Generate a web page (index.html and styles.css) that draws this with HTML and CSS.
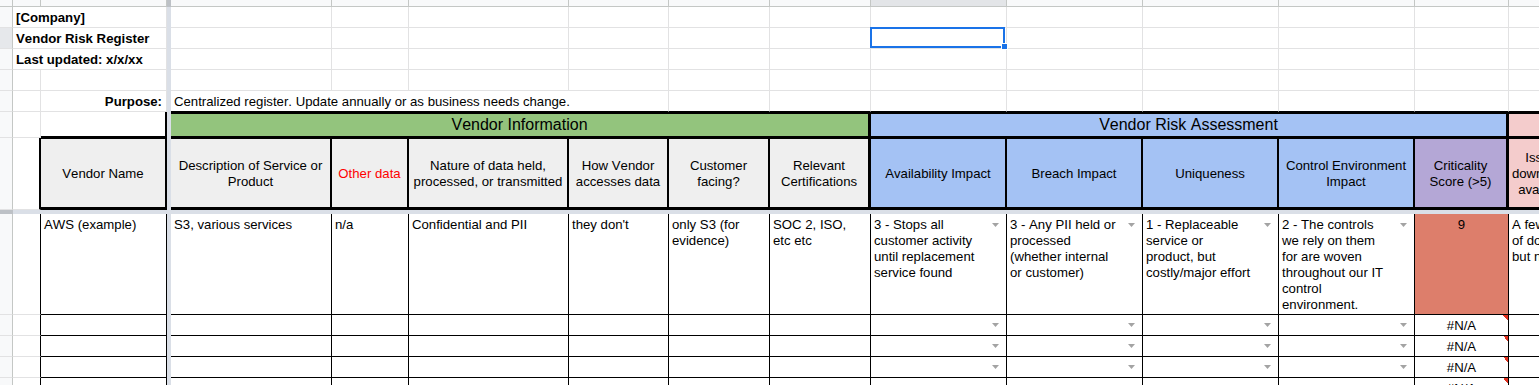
FILE: index.html
```html
<!DOCTYPE html>
<html lang="en">
<head>
<meta charset="utf-8">
<title>Vendor Risk Register</title>
<link rel="stylesheet" href="styles.css">
</head>
<body>
<div class="sheet">
  <div class="row r-hdr">
    <div class="ch"></div><div class="ch"></div><div class="ch"></div><div class="fzh"></div>
    <div class="ch"></div><div class="ch"></div><div class="ch"></div><div class="ch"></div><div class="ch"></div><div class="ch"></div>
    <div class="ch on"></div>
    <div class="ch"></div><div class="ch"></div><div class="ch"></div><div class="ch"></div><div class="ch"></div><div class="ch"></div>
  </div>
  <div class="row r-std">
    <div class="rh"></div><div class="title">[Company]</div><div class="fz"></div>
    <div></div><div></div><div></div><div></div><div></div><div></div><div></div><div></div><div></div><div></div><div></div><div></div><div></div>
  </div>
  <div class="row r-std">
    <div class="rh on"></div><div class="title">Vendor Risk Register</div><div class="fz"></div>
    <div></div><div></div><div></div><div></div><div></div><div></div>
    <div class="sel"><div class="selbox"><div class="handle"></div></div></div>
    <div></div><div></div><div></div><div></div><div></div><div></div>
  </div>
  <div class="row r-std">
    <div class="rh"></div><div class="title">Last updated: x/x/xx</div><div class="fz"></div>
    <div></div><div></div><div></div><div></div><div></div><div></div><div></div><div></div><div></div><div></div><div></div><div></div><div></div>
  </div>
  <div class="row r-std">
    <div class="rh"></div><div></div><div></div><div class="fz"></div>
    <div></div><div></div><div></div><div></div><div></div><div></div><div></div><div></div><div></div><div></div><div></div><div></div><div></div>
  </div>
  <div class="row r-std">
    <div class="rh"></div><div></div><div class="purpose">Purpose:</div><div class="fz"></div>
    <div class="note">Centralized register. Update annually or as business needs change.</div>
    <div class="tb"></div><div class="tb"></div><div class="tb"></div><div class="tb"></div><div class="tb"></div><div class="tb"></div><div class="tb"></div><div class="tb"></div><div class="tb"></div>
  </div>
  <div class="row r-band">
    <div class="rh"></div><div></div><div class="bx"></div><div class="fz"></div>
    <div class="band g">Vendor Information</div>
    <div class="band b">Vendor Risk Assessment</div>
    <div class="band p">Vendor Review</div>
  </div>
  <div class="row r-head">
    <div class="rh"></div><div class="al"></div>
    <div class="hd"><span>Vendor Name</span></div><div class="fz"></div>
    <div class="hd"><span>Description of Service or Product</span></div>
    <div class="hd"><span class="red">Other data</span></div>
    <div class="hd"><span>Nature of data held, processed, or transmitted</span></div>
    <div class="hd"><span>How Vendor accesses data</span></div>
    <div class="hd"><span>Customer facing?</span></div>
    <div class="hd end"><span>Relevant Certifications</span></div>
    <div class="hd b"><span>Availability Impact</span></div>
    <div class="hd b"><span>Breach Impact</span></div>
    <div class="hd b"><span>Uniqueness</span></div>
    <div class="hd b"><span>Control Environment Impact</span></div>
    <div class="hd v end"><span>Criticality Score (&gt;5)</span></div>
    <div class="hd p"><span class="nw">Issues with vendor's<br>downtime or data breach<br>availability in the past?</span></div>
    <div class="hd p"><span>Notes</span></div>
  </div>
  <div class="row r-frz">
    <div class="rhf"></div><div class="fzbar"></div>
  </div>
  <div class="row r-main">
    <div class="rh"></div><div class="a1"></div>
    <div class="d">AWS (example)</div><div class="fz"></div>
    <div class="d">S3, various services</div>
    <div class="d">n/a</div>
    <div class="d">Confidential and PII</div>
    <div class="d">they don't</div>
    <div class="d">only S3 (for evidence)</div>
    <div class="d">SOC 2, ISO, etc etc</div>
    <div class="dd"><span class="t">3 - Stops all customer activity until replacement service found</span><span class="ar"></span></div>
    <div class="dd"><span class="t">3 - Any PII held or processed (whether internal or customer)</span><span class="ar"></span></div>
    <div class="dd"><span class="t">1 - Replaceable service or product, but costly/major effort</span><span class="ar"></span></div>
    <div class="dd"><span class="t">2 - The controls we rely on them for are woven throughout our IT control environment.</span><span class="ar"></span></div>
    <div class="cs">9</div>
    <div class="d nw">A few instances<br>of downtime in 2022,<br>but no data loss.</div>
    <div class="d"></div>
  </div>
  <div class="row r-std">
    <div class="rh"></div><div class="a1"></div><div class="d"></div><div class="fz"></div>
    <div class="d"></div><div class="d"></div><div class="d"></div><div class="d"></div><div class="d"></div><div class="d"></div>
    <div class="dd e"><span class="ar"></span></div><div class="dd e"><span class="ar"></span></div><div class="dd e"><span class="ar"></span></div><div class="dd e"><span class="ar"></span></div>
    <div class="na">#N/A</div><div class="d"></div><div class="d"></div>
  </div>
  <div class="row r-std">
    <div class="rh"></div><div class="a1"></div><div class="d"></div><div class="fz"></div>
    <div class="d"></div><div class="d"></div><div class="d"></div><div class="d"></div><div class="d"></div><div class="d"></div>
    <div class="dd e"><span class="ar"></span></div><div class="dd e"><span class="ar"></span></div><div class="dd e"><span class="ar"></span></div><div class="dd e"><span class="ar"></span></div>
    <div class="na">#N/A</div><div class="d"></div><div class="d"></div>
  </div>
  <div class="row r-std">
    <div class="rh"></div><div class="a1"></div><div class="d"></div><div class="fz"></div>
    <div class="d"></div><div class="d"></div><div class="d"></div><div class="d"></div><div class="d"></div><div class="d"></div>
    <div class="dd e"><span class="ar"></span></div><div class="dd e"><span class="ar"></span></div><div class="dd e"><span class="ar"></span></div><div class="dd e"><span class="ar"></span></div>
    <div class="na">#N/A</div><div class="d"></div><div class="d"></div>
  </div>
  <div class="row r-std">
    <div class="rh"></div><div class="a1"></div><div class="d"></div><div class="fz"></div>
    <div class="d"></div><div class="d"></div><div class="d"></div><div class="d"></div><div class="d"></div><div class="d"></div>
    <div class="dd e"><span class="ar"></span></div><div class="dd e"><span class="ar"></span></div><div class="dd e"><span class="ar"></span></div><div class="dd e"><span class="ar"></span></div>
    <div class="na">#N/A</div><div class="d"></div><div class="d"></div>
  </div>
</div>
</body>
</html>
```
FILE: styles.css
```css
html, body {
  margin: 0;
  padding: 0;
  overflow: hidden;
  background: #fff;
}
body {
  font-family: "Liberation Sans", Arial, Helvetica, sans-serif;
  font-size: 13.2px;
  line-height: 16px;
  color: #000;
  font-kerning: none;
}
.sheet {
  display: flex;
  flex-direction: column;
  width: 1812px;
}
.row {
  display: grid;
  grid-template-columns: 13px 28px 126px 4px 161px 77px 160px 100px 101px 101px 136px 136px 136px 136px 94px 153px 150px;
}
.row > div {
  box-sizing: border-box;
  border-right: 1px solid #e2e2e3;
  border-bottom: 1px solid #e2e2e3;
  min-width: 0;
  overflow: hidden;
}
.r-hdr { height: 7px; }
.r-std { height: 21px; }
.r-band { height: 26px; }
.r-head { height: 72px; }
.r-frz { height: 4px; }
.r-main { height: 101px; }

/* sheet chrome */
.row > .ch { background: #f8f9fa; border-color: #c4c7c5; }
.row > .ch.on { background: #e3e5e8; }
.row > .rh { background: #f8f9fa; border-right-color: #c4c7c5; }
.row > .rh.on { background: #e6e8eb; }
.row > .fz { background: #dadfe7; border: 0; }
.row > .fzh { background: #bdc1c6; border: 0; }
.row > .rhf { background: #bdc1c6; border: 0; }
.row > .fzbar { grid-column: span 16; background: #dadfe7; border: 0; }

/* title block */
.row > .title {
  grid-column: span 2;
  font-weight: bold;
  display: flex;
  align-items: flex-end;
  padding: 0 3px 1px;
  white-space: nowrap;
}
.row > .purpose {
  font-weight: bold;
  display: flex;
  align-items: flex-end;
  justify-content: flex-end;
  padding: 0 4px 1px 3px;
}
.row > .note {
  grid-column: span 4;
  display: flex;
  align-items: flex-end;
  padding: 0 3px 1px;
  white-space: nowrap;
  border-bottom-color: #000;
}
.row > .tb { border-bottom-color: #000; }

/* section bands */
.row > .bx { border-right: 2px solid #000; border-bottom: 2px solid #000; }
.row > .band {
  display: flex;
  align-items: center;
  justify-content: center;
  font-size: 16px;
  line-height: 18px;
  white-space: nowrap;
  border-top: 2px solid #000;
  border-bottom: 2px solid #000;
  border-right: 3px solid #000;
}
.row > .band.g { grid-column: span 6; background: #93c47d; }
.row > .band.b { grid-column: span 5; background: #a4c2f4; }
.row > .band.p { grid-column: span 2; background: #f4cccc; }

/* column headers */
.row > .al { border-right: 2px solid #000; }
.row > .hd {
  display: flex;
  align-items: center;
  justify-content: center;
  text-align: center;
  padding: 2px 2px 0;
  background: #efefef;
  border-top: 1px solid #000;
  border-right: 2px solid #000;
  border-bottom: 3px solid #000;
}
.row > .hd.end { border-right-width: 3px; }
.row > .hd.b { background: #a4c2f4; }
.row > .hd.v { background: #b4a7d6; }
.row > .hd.p { background: #f4cccc; }
.red { color: #ff0000; }
.nw { white-space: nowrap; }

/* data */
.row > .a1 { border-right-color: #000; }
.row > .d {
  padding: 3px 5px 0 3px;
  border-right-color: #000;
  border-bottom-color: #000;
}
.row > .d.nw { white-space: nowrap; }
.row > .dd {
  display: flex;
  align-items: flex-start;
  padding: 3px 7px 0 3px;
  border-right-color: #000;
  border-bottom-color: #000;
}
.dd > .t { flex: 1; min-width: 0; }
.dd > .ar {
  flex: none;
  width: 7px;
  height: 4px;
  background: #a3a3a3;
  clip-path: polygon(0 0, 100% 0, 50% 100%);
  margin: 6px 0 0 11px;
}
.row > .dd.e { align-items: center; padding-top: 0; }
.dd.e > .ar { margin: 0 0 0 auto; }
.row > .cs {
  text-align: center;
  padding-top: 3px;
  background: #dd7e6b;
  border-right-color: #000;
  border-bottom-color: #000;
}
.row > .na {
  display: flex;
  align-items: center;
  justify-content: center;
  padding-top: 1px;
  border-right-color: #000;
  border-bottom-color: #000;
  background: linear-gradient(225deg, #e0301e 50%, transparent 50%) right top / 5px 5px no-repeat;
}

/* active cell selection */
.row > .sel { position: relative; overflow: visible; }
.selbox {
  position: absolute;
  top: -1px;
  left: -1px;
  right: 1px;
  bottom: 0;
  box-sizing: border-box;
  border: 2px solid #1a73e8;
}
.handle {
  position: absolute;
  right: -5px;
  bottom: -4px;
  width: 7px;
  height: 7px;
  box-sizing: border-box;
  background: #1a73e8;
  border: 1px solid #fff;
}
```
